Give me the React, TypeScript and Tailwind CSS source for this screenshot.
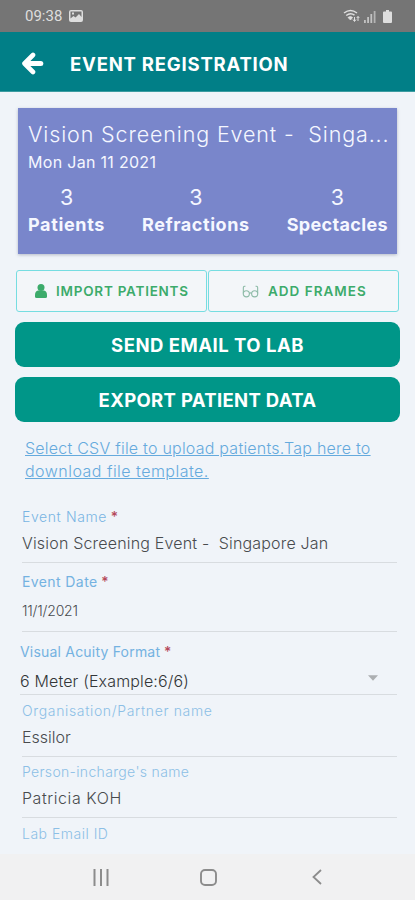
import type { ReactNode } from "react";

function StatusBar() {
  return (
    <div className="flex h-8 shrink-0 items-center justify-between bg-[#757575] pl-[25px] pr-[23px] text-[#dedede]">
      <div className="flex items-center gap-[7px]">
        <span className="font-[Roboto,sans-serif] text-[15px] leading-8">09:38</span>
        <svg width="14" height="12" viewBox="0 0 14 12">
          <path fillRule="evenodd" fill="currentColor" d="M2 0h10a2 2 0 0 1 2 2v8a2 2 0 0 1-2 2H2a2 2 0 0 1-2-2V2a2 2 0 0 1 2-2Zm-.5 1.500v7L4.500 6l2 1.500L10 4l2.500 3V1.500ZM3 2.500h2v2H3Z" />
        </svg>
      </div>
      <div className="flex items-center">
        <svg width="17" height="14" viewBox="0 0 17 14" fill="none" stroke="currentColor">
          <path d="M1 4Q7.500-1 14 4" strokeWidth="1.500" />
          <path d="M3.200 6.500Q7.500 3 11.500 6.200" strokeWidth="1.500" />
          <path d="M5 8.500Q7.500 6.500 9.500 8.500L7.500 11Z" fill="currentColor" strokeWidth=".8" />
          <path d="M11.500 8v4M10 10.500l1.500 2 1.500-2M15 12V7.500M13.700 9L15 7.500 16.300 9" strokeWidth="1" />
        </svg>
        <svg className="ml-1" width="12" height="13" viewBox="0 0 12 13" fill="currentColor">
          <path d="M0 10h1.800v3H0ZM3.200 7H5v6H3.200ZM6.400 4h1.800v9H6.400Z" opacity=".75" />
          <path d="M9.700 1h1.800v12H9.700Z" opacity=".6" />
        </svg>
        <svg className="ml-[7px]" width="9" height="13" viewBox="0 0 9 13" fill="currentColor">
          <path d="M3 0h3v1.500h2a1 1 0 0 1 1 1V12a1 1 0 0 1-1 1H1a1 1 0 0 1-1-1V2.500a1 1 0 0 1 1-1h2Z" />
        </svg>
      </div>
    </div>
  );
}

function Header() {
  return (
    <header className="flex h-[60px] shrink-0 items-center border-b border-[#3d9ca1] bg-[#017f87] pl-[21px] text-white">
      <svg className="mt-1" width="23" height="23" viewBox="0 0 23 23" fill="none" stroke="currentColor" strokeLinecap="round" strokeLinejoin="round">
        <path d="M12 3L3.500 11.500l8.500 8.500" strokeWidth="4.600" />
        <path d="M5 11.500h14.800" strokeWidth="5" />
      </svg>
      <h1 className="ml-[26px] mt-1 whitespace-nowrap text-[18.500px] font-bold leading-6 tracking-[0.79px]">EVENT REGISTRATION</h1>
    </header>
  );
}

function EventCard() {
  return (
    <section className="mx-[18px] mt-4 h-[146px] shrink-0 bg-[#7986cb] pl-[10px] pr-[9px] text-[#f5f7ff] shadow-[0_1px_3px_rgba(70,80,110,0.35)]">
      <h2 className="whitespace-pre pt-[10px] text-[21.500px] font-light leading-8 tracking-[0.86px]">{"Vision Screening Event -  Singa..."}</h2>
      <p className="whitespace-nowrap text-[16px] leading-6 tracking-[0.3px]">Mon Jan 11 2021</p>
      <div className="mt-2 flex justify-between text-center">
        <div>
          <div className="text-[21.500px] leading-[30px]">3</div>
          <div className="pt-px text-[18px] font-bold leading-6 tracking-[0.65px]">Patients</div>
        </div>
        <div>
          <div className="text-[21.500px] leading-[30px]">3</div>
          <div className="pt-px text-[18px] font-bold leading-6 tracking-[0.55px]">Refractions</div>
        </div>
        <div>
          <div className="text-[21.500px] leading-[30px]">3</div>
          <div className="pt-px text-[18px] font-bold leading-6 tracking-[0.35px]">Spectacles</div>
        </div>
      </div>
    </section>
  );
}

function Actions() {
  return (
    <div className="mt-4 flex shrink-0 flex-col px-[15px]">
      <div className="flex h-[42px] gap-px px-px text-[13.500px] font-semibold text-[#3cab6b]">
        <button className="flex w-[191px] items-center rounded-[3px] border border-[#76dde1] bg-[#f3f6f9] pl-[18px]">
          <svg width="12" height="14" viewBox="0 0 12 14" fill="currentColor">
            <circle cx="6" cy="3.500" r="3.500" />
            <path d="M3 6.500h6q3 .8 3 4.500v1.500q0 1.500-1.500 1.500h-9Q0 14 0 12.500V11q0-3.700 3-4.500Z" />
          </svg>
          <span className="ml-[9px] whitespace-nowrap tracking-[0.76px]">IMPORT PATIENTS</span>
        </button>
        <button className="flex w-[191px] items-center rounded-[3px] border border-[#76dde1] bg-[#f3f6f9] pl-[33px]">
          <svg width="17" height="13" viewBox="0 0 18 14" fill="none" stroke="#8ebba8" strokeWidth="1.200">
            <circle cx="4.500" cy="9.500" r="3.300" />
            <circle cx="13.500" cy="9.500" r="3.300" />
            <path d="M7.800 9q1.200-1 2.400 0M1.300 9V3q0-2 2.200-1.500M16.700 9V3q0-2-2.200-1.500" />
          </svg>
          <span className="ml-[9px] whitespace-nowrap tracking-[1px]">ADD FRAMES</span>
        </button>
      </div>
      <button className="mt-[10px] h-[45px] rounded-[9px] bg-[#009688] pt-[2px] text-[18.500px] font-bold tracking-[0.5px] text-white">SEND EMAIL TO LAB</button>
      <button className="mt-[10px] h-[45px] rounded-[9px] bg-[#009688] pt-[3px] text-[18.500px] font-bold tracking-[0.33px] text-white">EXPORT PATIENT DATA</button>
    </div>
  );
}

function Required() {
  return <span className="font-medium tracking-normal text-[#b5485a]"> *</span>;
}

function Field({ className, children }: { className: string; children: ReactNode }) {
  return <div className={"flex shrink-0 flex-col whitespace-pre border-b border-[#d8dce0] " + className}>{children}</div>;
}

function EventForm() {
  return (
    <div className="flex flex-col pl-[22px] pr-[18px] text-[#484b4e]">
      <Field className="mt-[24px] h-[56px]">
        <label className="text-[14px] leading-5 font-light tracking-[0.6px] text-[#79b5e3]">Event Name<Required /></label>
        <div className="mt-[6px] text-[16px] font-light leading-5 tracking-[0.18px]">{"Vision Screening Event -  Singapore Jan"}</div>
      </Field>
      <Field className="mt-[9px] h-[60px]">
        <label className="text-[14px] leading-5 tracking-[0.4px] text-[#74b2e1]">Event Date<Required /></label>
        <div className="mt-[9px] text-[14px] font-light leading-5 tracking-[-0.2px]">11/1/2021</div>
      </Field>
      <Field className="-ml-[2px] mt-[10px] h-[53px]">
        <label className="text-[14px] leading-5 tracking-[0.2px] text-[#74b2e1]">Visual Acuity Format<Required /></label>
        <div className="mt-[9px] flex items-center justify-between pr-[19px] text-[16px] font-light leading-5 tracking-[0.15px] text-[#333638]">
          <span>6 Meter (Example:6/6)</span>
          <svg className="-mt-[6px]" width="10" height="6" viewBox="0 0 11 6"><path d="M0 0h11L5.500 6Z" fill="#acafb2" /></svg>
        </div>
      </Field>
      <Field className="mt-[6px] h-[56px]">
        <label className="text-[14px] leading-5 font-light tracking-[0.65px] text-[#8cbfe6]">Organisation/Partner name</label>
        <div className="mt-[6px] text-[16px] font-light leading-5">Essilor</div>
      </Field>
      <Field className="mt-[5px] h-[56px]">
        <label className="text-[14px] leading-5 font-light tracking-[0.33px] text-[#8cbfe6]">Person-incharge's name</label>
        <div className="mt-[6px] text-[16px] font-light leading-5 tracking-[0.57px]">Patricia KOH</div>
      </Field>
      <label className="mt-[6px] text-[14px] leading-5 font-light tracking-[0.5px] text-[#8cbfe6]">Lab Email ID</label>
    </div>
  );
}

function NavigationBar() {
  return (
    <nav className="flex h-[46px] shrink-0 items-center justify-between bg-[#f1f1f2] px-[93px] text-[#8c8c8c]">
      <svg width="16" height="17" viewBox="0 0 16 17" fill="none" stroke="currentColor" strokeWidth="2">
        <path d="M1.500 0v17M8 0v17M14.500 0v17" />
      </svg>
      <svg className="mr-[5px]" width="17" height="17" viewBox="0 0 17 17" fill="none" stroke="currentColor" strokeWidth="1.900">
        <rect x="1" y="1" width="15" height="15" rx="4" />
      </svg>
      <svg width="10" height="16" viewBox="0 0 10 16" fill="none" stroke="currentColor" strokeWidth="1.800">
        <path d="M9 1L1.500 8 9 15" />
      </svg>
    </nav>
  );
}

export default function App() {
  return (
    <div className="flex h-[900px] w-[415px] flex-col overflow-hidden bg-[#f0f4f9] font-[Inter,sans-serif]">
      <StatusBar />
      <Header />
      <main className="flex min-h-0 flex-1 flex-col">
        <EventCard />
        <Actions />
        <p className="ml-[25px] mt-[15px] whitespace-nowrap text-[16px] font-light leading-[23px] text-[#65aadd] underline underline-offset-1">
          <span className="tracking-[0.23px]">Select CSV file to upload patients.Tap here to</span>
          <br />
          <span className="tracking-[0.48px]">download file template.</span>
        </p>
        <EventForm />
      </main>
      <NavigationBar />
    </div>
  );
}
